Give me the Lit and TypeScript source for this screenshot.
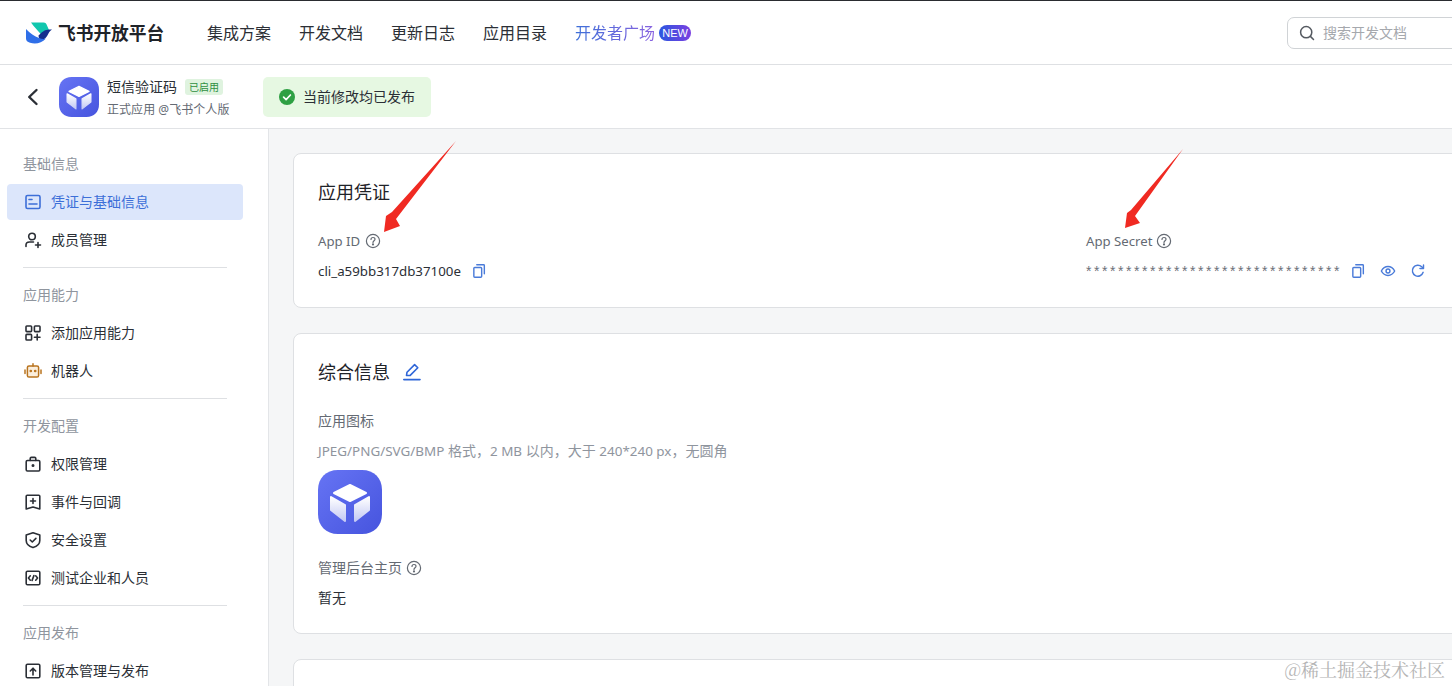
import { LitElement, html, css, svg } from "lit";
import { customElement } from "lit/decorators.js";

const ic = (body: unknown, size = 18, cls = "") => html`<svg class=${cls} width=${size} height=${size} viewBox="0 0 18 18" fill="none" stroke="currentColor" stroke-width="1.6" stroke-linecap="round" stroke-linejoin="round">${body}</svg>`;

const cube = (size: number, id: string) => html`<svg width=${size} height=${size} viewBox="0 0 64 64">
  <defs>
    <linearGradient id="${id}b" x1="0" y1="0" x2="1" y2="1"><stop offset="0" stop-color="#6674f4"/><stop offset="1" stop-color="#4654de"/></linearGradient>
    <linearGradient id="${id}f" x1="0" y1="0" x2="0" y2="1"><stop offset="0" stop-color="#ffffff"/><stop offset="1" stop-color="#c4c9f4"/></linearGradient>
  </defs>
  <path d="M20 0H44C56 0 64 8 64 20V44C64 56 56 64 44 64H20C8 64 0 56 0 44V20C0 8 8 0 20 0Z" fill="url(#${id}b)"/>
  <g stroke-linejoin="round" stroke-width="2">
    <path d="M32 15L48 23L32 31L16 23Z" fill="#fff" stroke="#fff"/>
    <path d="M13 27L27 35V51L13 40Z" fill="url(#${id}f)" stroke="url(#${id}f)"/>
    <path d="M37 35L51 27V40L37 51Z" fill="url(#${id}f)" stroke="url(#${id}f)"/>
  </g>
</svg>`;

const help = html`<svg class="help" width="16" height="16" viewBox="0 0 16 16" fill="none" stroke="currentColor" stroke-width="1.2" stroke-linecap="round"><circle cx="8" cy="8" r="6.6"/><path d="M6 6.4C6 5.2 6.9 4.5 8 4.5C9.1 4.5 10 5.2 10 6.3C10 7.7 8 7.8 8 9.4"/><circle cx="8" cy="11.4" r=".5" fill="currentColor"/></svg>`;

const copy = ic(svg`<rect x="3.2" y="5" width="8.8" height="11" rx="1" /><path d="M6.5 2H14.2C14.6 2 15 2.4 15 2.8V12"/>`, 16, "act");
const eye = ic(svg`<path d="M1.5 9C3.2 5.8 5.8 4 9 4C12.2 4 14.8 5.8 16.5 9C14.8 12.2 12.2 14 9 14C5.8 14 3.2 12.2 1.5 9Z"/><circle cx="9" cy="9" r="2.2"/>`, 16, "act");
const refresh = ic(svg`<path d="M14.8 10.5A6.2 6.2 0 1 1 13.2 4.2L15 6"/><path d="M15.2 2.2V6.2H11.2"/>`, 16, "act");

const icons: Record<string, unknown> = {
  cred: svg`<rect x="2" y="2.500" width="14" height="13" rx="1.500"/><path d="M5 6.500H8M5 11H13"/>`,
  member: svg`<circle cx="8" cy="5.500" r="3.300"/><path d="M2 15.500V14C2 12 3.500 11 5.500 11H9.500"/><path d="M11.500 14H16.500M14 11.500V16.500"/>`,
  add: svg`<rect x="2" y="2" width="5.600" height="5.600" rx=".8"/><rect x="10.400" y="2" width="5.600" height="5.600" rx=".8"/><rect x="2" y="10.400" width="5.600" height="5.600" rx=".8"/><path d="M10.400 13.200H16M13.200 10.400V16"/>`,
  perm: svg`<rect x="2.200" y="5.500" width="13.600" height="10.500" rx="1.200"/><path d="M6.200 5.500V3.600C6.200 2.900 6.700 2.400 7.400 2.400H10.600C11.300 2.400 11.800 2.900 11.800 3.600V5.500"/><circle cx="9" cy="10.500" r=".7" fill="currentColor"/>`,
  event: svg`<path d="M2.200 3.200C2.200 2.600 2.600 2.200 3.200 2.200H14.800C15.400 2.200 15.800 2.600 15.800 3.200V16L9 14L2.200 16Z"/><path d="M6.500 8H11.500M9 5.500V10.500"/>`,
  safe: svg`<path d="M9 1.800L15.800 4V9.500C15.800 13 12.500 15.500 9 16.600C5.500 15.500 2.200 13 2.200 9.500V4Z"/><path d="M6.200 9L8.300 11L11.900 7.400"/>`,
  test: svg`<rect x="2.200" y="2.200" width="13.600" height="13.600" rx="1.300"/><path d="M6.300 6.800L4.400 9L6.300 11.200M11.700 6.800L13.600 9L11.700 11.200M9.900 6.600L8.100 11.400"/>`,
  pub: svg`<rect x="2.200" y="2.200" width="13.600" height="13.600" rx="1.300"/><path d="M9 13V6.500M6.300 9L9 6.200L11.700 9"/>`,
};
const robot = html`<svg width="18" height="18" viewBox="0 0 18 18" fill="none" stroke="#b9741f" stroke-width="1.5" stroke-linecap="round" stroke-linejoin="round"><rect x="3.400" y="4" width="11.200" height="11" rx="1.600" fill="#fbeedc"/><path d="M9 1.800V4M1 8V11.500M17 8V11.500"/><circle cx="6.800" cy="9" r=".6" fill="#b9741f"/><circle cx="11.200" cy="9" r=".6" fill="#b9741f"/></svg>`;

@customElement("app-root")
export class AppRoot extends LitElement {
  static styles = css`
    :host { display: flex; flex-direction: column; position: relative; height: 100vh; overflow: hidden; background: #fff; color: #1f2329;
      font-family: "Noto Sans", "Noto Sans CJK SC", sans-serif; font-size: 14px; line-height: 22px; border-top: 1px solid #2a2c30; box-sizing: border-box; }
    * { box-sizing: border-box; }
    svg { display: block; flex: none; }
    .top { flex: none; height: 64px; display: flex; align-items: center; padding-left: 26px; border-bottom: 1px solid #dee0e3; }
    .brand { font-size: 17.7px; font-weight: 700; margin-left: 6px; width: 149px; color: #1f2329; white-space: nowrap; }
    nav { display: flex; gap: 28px; font-size: 16px; color: #2b2f36; align-items: center; }
    .grad { background: linear-gradient(90deg, #3d6fd8, #8a63e0); -webkit-background-clip: text; background-clip: text; color: transparent; }
    .plaza { display: flex; align-items: center; gap: 4px; }
    .new { width: 32px; height: 16px; border-radius: 8px; background: linear-gradient(90deg, #2a57e0, #7a3fe0); color: #fff; font: 11px/16px "Liberation Sans", sans-serif; text-align: center; }
    .search { margin-left: auto; margin-right: -40px; width: 205px; height: 32px; border: 1px solid #d0d3d6; border-radius: 7px; display: flex; align-items: center; padding-left: 11px; gap: 8px; color: #a5a8ad; }
    .search svg { color: #555a61; }
    .sub { flex: none; height: 64px; display: flex; align-items: center; padding-left: 24px; border-bottom: 1px solid #e1e3e6; }
    .back { margin-right: 17px; }
    .names { margin-left: 8px; width: 156px; padding-top: 3px; }
    .nm { display: flex; align-items: center; gap: 8px; height: 21px; color: #2b2f36; }
    .tag { font-size: 10px; line-height: 16px; height: 16px; padding: 0 4px; border-radius: 3px; background: #dff3df; color: #2f8f3f; }
    .own { font-size: 12px; line-height: 20px; margin-top: 2px; color: #646a73; white-space: nowrap; letter-spacing: .05px; }
    .status { width: 168px; height: 40px; border-radius: 5px; background: #e6f8e2; display: flex; align-items: center; gap: 8px; padding-left: 16px; color: #2b2f36; }
    .body { flex: 1; display: flex; min-height: 0; }
    aside { flex: none; width: 269px; border-right: 1px solid #e3e5e8; padding: 25px 0 0; }
    .lab { height: 20px; line-height: 20px; margin: 0 0 9px 23px; font-size: 14px; color: #8f959e; }
    .lab:first-child { margin-bottom: 10px; }
    .it { height: 38px; display: flex; align-items: center; gap: 9px; padding-left: 24px; color: #2b2f36; font-size: 14px; white-space: nowrap; }
    .it.on { height: 36px; margin: 1px 25px 1px 7px; padding-left: 17px; background: #dce6fb; border-radius: 4px; color: #3d6fd8; }
    hr { border: 0; height: 1px; background: #dee0e3; margin: 8px 41px 17px 23px; }
    main { flex: 1; min-width: 0; background: #f5f6f7; padding: 24px 0 0 24px; display: flex; flex-direction: column; gap: 25px; overflow: hidden; }
    .card { flex: none; width: 1300px; background: #fff; border: 1px solid #dee0e3; border-radius: 8px; padding: 0 24px; }
    .c1 { padding-top: 25px; padding-bottom: 25px; }
    .c2 { padding-top: 25px; padding-bottom: 24px; }
    .c3 { height: 120px; }
    h2 { margin: 0; font-size: 18px; font-weight: 400; line-height: 26px; color: #1f2329; display: flex; align-items: center; gap: 13px; }
    h2 svg { color: #2f66d8; }
    .cols { display: grid; grid-template-columns: 768px 1fr; margin-top: 25px; }
    .k { display: flex; align-items: center; gap: 4px; color: #646a73; height: 22px; }
    .k.id { gap: 5px; }
    .lat { font-size: 13.2px; }
    .help { color: #646a73; }
    .v { display: flex; align-items: center; height: 22px; margin-top: 8px; color: #2b2f36; }
    .vt { font-size: 13.3px; }
    .act { color: #4a7bd9; }
    .v .act { margin-left: 10px; }
    .stars { color: #6b7078; font: 14px/22px "Liberation Sans", sans-serif; letter-spacing: 2.55px; white-space: nowrap; }
    .acts { display: flex; gap: 14px; margin-left: 8px; }
    .v .acts .act { margin: 0; }
    .field { margin-top: 23px; }
    .f0 { margin-top: 25px; }
    .hint { margin-top: 8px; height: 22px; color: #8f959e; white-space: nowrap; }
    .hint b { font-weight: 400; font-size: 13.45px; }
    .bigicon { margin-top: 8px; }
    .arrows { position: absolute; left: 0; top: 0; pointer-events: none; }
    .wm { position: absolute; right: 7px; bottom: 5px; font-family: "Noto Serif CJK SC", "Liberation Serif", "Noto Sans CJK SC", serif; font-size: 18px; line-height: 24px; color: #b4b4b4; white-space: nowrap; }
  `;

  item(icon: unknown, label: string, on = false) {
    return html`<div class="it ${on ? "on" : ""}">${icon}<span>${label}</span></div>`;
  }

  render() {
    return html`
      <header class="top">
        <svg width="26" height="22" viewBox="0 0 26 22">
          <path d="M5 .6H17.500C19.500.6 20.400 1.800 21 3.400L23 8C19.800 8.600 17.600 10.600 15.800 13C12 9 8 5 5 .6Z" fill="#12c7ae"/>
          <path d="M12.500 13.500C16 10 19 6.600 26 7.600C23.600 9 22.800 11 21.400 13.600C20 16.400 17.500 18.200 14 17.400C13 16.800 12.600 14.600 12.500 13.500Z" fill="#14308f"/>
          <path d="M0 7C4 11 8.500 14.500 13 16C15.500 17 18 17.400 20 16.400C15.500 21 10 22.600 4 20.800C1.500 20 0 18.600 0 16.500Z" fill="#2f6fe8"/>
        </svg>
        <div class="brand">飞书开放平台</div>
        <nav>
          <span>集成方案</span><span>开发文档</span><span>更新日志</span><span>应用目录</span>
          <span class="plaza"><span class="grad">开发者广场</span><span class="new">NEW</span></span>
        </nav>
        <div class="search">
          <svg width="16" height="16" viewBox="0 0 16 16" fill="none" stroke="currentColor" stroke-width="1.5" stroke-linecap="round"><circle cx="7.200" cy="7.200" r="5.600"/><path d="M11.400 11.400L14.500 14.500"/></svg>
          <span>搜索开发文档</span>
        </div>
      </header>
      <section class="sub">
        <svg class="back" width="18" height="18" viewBox="0 0 18 18" fill="none" stroke="#2b2f36" stroke-width="2.400" stroke-linecap="round" stroke-linejoin="round"><path d="M12.500 2L5.200 9L12.500 16"/></svg>
        ${cube(40, "a")}
        <div class="names">
          <div class="nm"><span>短信验证码</span><span class="tag">已启用</span></div>
          <div class="own">正式应用 @飞书个人版</div>
        </div>
        <div class="status">
          <svg width="16" height="16" viewBox="0 0 16 16"><circle cx="8" cy="8" r="8" fill="#2ea043"/><path d="M4.600 8.200L7.100 10.600L11.400 6" fill="none" stroke="#fff" stroke-width="1.700" stroke-linecap="round" stroke-linejoin="round"/></svg>
          <span>当前修改均已发布</span>
        </div>
      </section>
      <div class="body">
        <aside>
          <div class="lab">基础信息</div>
          ${this.item(ic(icons.cred), "凭证与基础信息", true)}
          ${this.item(ic(icons.member), "成员管理")}
          <hr />
          <div class="lab">应用能力</div>
          ${this.item(ic(icons.add), "添加应用能力")}
          ${this.item(robot, "机器人")}
          <hr />
          <div class="lab">开发配置</div>
          ${this.item(ic(icons.perm), "权限管理")}
          ${this.item(ic(icons.event), "事件与回调")}
          ${this.item(ic(icons.safe), "安全设置")}
          ${this.item(ic(icons.test), "测试企业和人员")}
          <hr />
          <div class="lab">应用发布</div>
          ${this.item(ic(icons.pub), "版本管理与发布")}
        </aside>
        <main>
          <section class="card c1">
            <h2>应用凭证</h2>
            <div class="cols">
              <div>
                <div class="k id"><span class="lat">App ID</span>${help}</div>
                <div class="v"><span class="vt">cli_a59bb317db37100e</span>${copy}</div>
              </div>
              <div>
                <div class="k"><span class="lat">App Secret</span>${help}</div>
                <div class="v"><span class="stars">********************************</span><span class="acts">${copy}${eye}${refresh}</span></div>
              </div>
            </div>
          </section>
          <section class="card c2">
            <h2>综合信息
              <svg width="18" height="18" viewBox="0 0 18 18" fill="none" stroke="currentColor" stroke-width="1.600" stroke-linejoin="round" stroke-linecap="round"><path d="M3.500 12.500L4 9.200L11.600 1.600L14.800 4.800L7.200 12.400Z"/><path d="M.8 16.600H17"/></svg>
            </h2>
            <div class="field f0 k">应用图标</div>
            <div class="hint"><b>JPEG/PNG/SVG/BMP</b> 格式，<b>2 MB</b> 以内，大于 <b>240*240 px</b>，无圆角</div>
            <div class="bigicon">${cube(64, "b")}</div>
            <div class="field k"><span>管理后台主页</span>${help}</div>
            <div class="v">暂无</div>
          </section>
          <section class="card c3"></section>
        </main>
      </div>
      <svg class="arrows" width="1452" height="686" viewBox="0 0 1452 686">
        <path d="M456 140L392 211L386 215L384 231L400 225L396 218Z" fill="#f02a22"/>
        <path d="M1183 148L1131 209L1127 212L1125 227L1140 222L1135 215Z" fill="#f02a22"/>
      </svg>
      <div class="wm">@稀土掘金技术社区</div>
    `;
  }
}
